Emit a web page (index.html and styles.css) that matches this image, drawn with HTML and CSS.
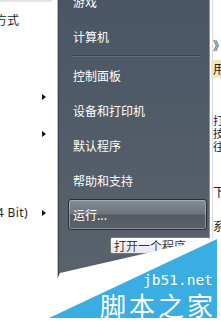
FILE: index.html
```html
<!DOCTYPE html>
<html lang="zh">
<head>
<meta charset="utf-8">
<title>开始菜单</title>
<link rel="stylesheet" href="styles.css">
</head>
<body>
<div class="screen">
  <div class="left">
    <div class="topline"></div>
    <div class="opt"><span>方式</span></div>
    <div class="arow a1"><i class="arrow"></i></div>
    <div class="arow a2"><i class="arrow"></i></div>
    <div class="arow a3"><span class="bit"><span>(64 Bit)</span></span><i class="arrow"></i></div>
  </div>
  <div class="menu">
    <div class="item first">游戏</div>
    <div class="item">计算机</div>
    <div class="sep"></div>
    <div class="item">控制面板</div>
    <div class="item">设备和打印机</div>
    <div class="item">默认程序</div>
    <div class="item">帮助和支持</div>
    <div class="run">运行...</div>
    <div class="tip">打开一个程序、文件夹、文档或网站。</div>
  </div>
  <div class="strip">
    <div class="g s1">》</div>
    <div class="g hl">用</div>
    <div class="g sm s3">打</div>
    <div class="g sm">技</div>
    <div class="g sm">往</div>
    <div class="g s6">下</div>
    <div class="g s7">系</div>
  </div>
  <div class="wm">
    <div class="wm-white"></div>
    <div class="wm-blue"></div>
    <span class="wm-url">jb51.net</span>
    <span class="wm-name">脚本之家</span>
  </div>
</div>
</body>
</html>
```
FILE: styles.css
```css
html, body {
  margin: 0;
  padding: 0;
  background: #fff;
}
body {
  font-family: "Noto Sans CJK SC", "Noto Sans", sans-serif;
  font-size: 12px;
}
.screen {
  position: relative;
  display: flex;
  width: 221px;
  height: 321px;
  overflow: hidden;
}

/* left white pane */
.left {
  width: 57px;
  flex: none;
  display: flex;
  flex-direction: column;
  background: #fff;
  color: #1e1e1e;
}
.topline {
  height: 2px;
  width: 52px;
  background: #e2e4e6;
}
.opt {
  margin-top: 12px;
  height: 12px;
  line-height: 12px;
  overflow: hidden;
  white-space: nowrap;
}
.opt span {
  margin-left: -5px;
}
.arow {
  display: flex;
  align-items: center;
  height: 7px;
  padding-left: 42px;
}
.a1 { margin-top: 67px; }
.a2 { margin-top: 30px; }
.a3 {
  margin-top: 69px;
  height: 14px;
  padding-left: 0;
}
.bit {
  width: 28px;
  overflow: hidden;
  display: flex;
  justify-content: flex-end;
  white-space: nowrap;
  font-family: "Noto Sans", sans-serif;
  font-size: 12px;
  line-height: 14px;
  letter-spacing: 0.4px;
  flex: none;
}
.a3 .arrow { margin-left: 14px; }
.arrow {
  display: block;
  width: 0;
  height: 0;
  border-left: 4px solid #111;
  border-top: 3.5px solid transparent;
  border-bottom: 3.5px solid transparent;
}

/* dark start menu pane */
.menu {
  width: 152px;
  flex: none;
  display: flex;
  flex-direction: column;
  border-left: 1px solid #b9bec3;
  box-shadow: inset 1px 0 0 #3b444f, inset -1px 0 0 #8c949c;
  background: linear-gradient(180deg, #4a5664 0%, #505b68 35%, #57616b 70%, #5b636d 100%);
  color: #fff;
}
.item {
  height: 35px;
  display: flex;
  align-items: center;
  padding-left: 15px;
  white-space: nowrap;
  line-height: 14px;
  flex: none;
}
.item.first { margin-top: -16px; }
.sep {
  height: 1px;
  margin: 1px 10px 2px 14px;
  background: #3d4651;
  box-shadow: 0 1px 0 #67717c;
  flex: none;
}
.run {
  margin: 1px 0 0 10px;
  width: 133px;
  height: 29px;
  display: flex;
  align-items: center;
  padding-left: 4px;
  box-sizing: content-box;
  border: 1px solid #2a2f35;
  border-radius: 3px;
  box-shadow: inset 0 0 0 1px rgba(210, 216, 222, 0.45);
  background: linear-gradient(180deg, #858b92 0%, #70767e 47%, #555b63 53%, #5a6068 100%);
  line-height: 14px;
  flex: none;
}
.tip {
  margin: 7px 0 0 52px;
  align-self: flex-start;
  width: 96px;
  height: 15px;
  line-height: 15px;
  padding-left: 3px;
  border: 1px solid #777;
  border-radius: 2px;
  background: linear-gradient(180deg, #ffffff 0%, #e5e6ed 100%);
  color: #3a3a3a;
  white-space: nowrap;
  overflow: hidden;
  flex: none;
}

/* right background strip */
.strip {
  width: 11px;
  flex: none;
  display: flex;
  flex-direction: column;
  background: #fff;
  box-shadow: inset 2px 0 0 #fff, inset 3px 0 0 #dcdcdc;
  overflow: hidden;
  color: #222;
}
.g {
  height: 14px;
  line-height: 14px;
  padding-left: 3px;
  white-space: nowrap;
  flex: none;
}
.g.sm {
  height: 13px;
  line-height: 13px;
  font-size: 11px;
}
.s1 { margin-top: 39px; }
.hl {
  margin-top: 7px;
  height: 18px;
  line-height: 18px;
  margin-left: 1px;
  padding-left: 2px;
  background: #f1e7bd;
}
.s3 { margin-top: 36px; }
.s6 { margin-top: 32px; }
.s7 { margin-top: 20px; }

/* watermark overlay */
.wm {
  position: absolute;
  inset: 0;
}
.wm-white {
  position: absolute;
  inset: 0;
  background: #fff;
  clip-path: polygon(60px 273px, 217px 237px, 221px 237px, 221px 321px, 38px 321px);
}
.wm-blue {
  position: absolute;
  inset: 0;
  background: #3aade2;
  clip-path: polygon(217px 239px, 217px 318px, 49px 318px);
}
.wm-url {
  position: absolute;
  left: 143px;
  top: 274px;
  font-family: "DejaVu Sans Mono", monospace;
  font-size: 14.5px;
  line-height: 12px;
  color: #fff;
}
.wm-name {
  position: absolute;
  left: 100px;
  top: 292px;
  font-family: "Noto Sans CJK SC", sans-serif;
  font-size: 26px;
  line-height: 26px;
  letter-spacing: 3px;
  color: #fff;
  white-space: nowrap;
}
```
